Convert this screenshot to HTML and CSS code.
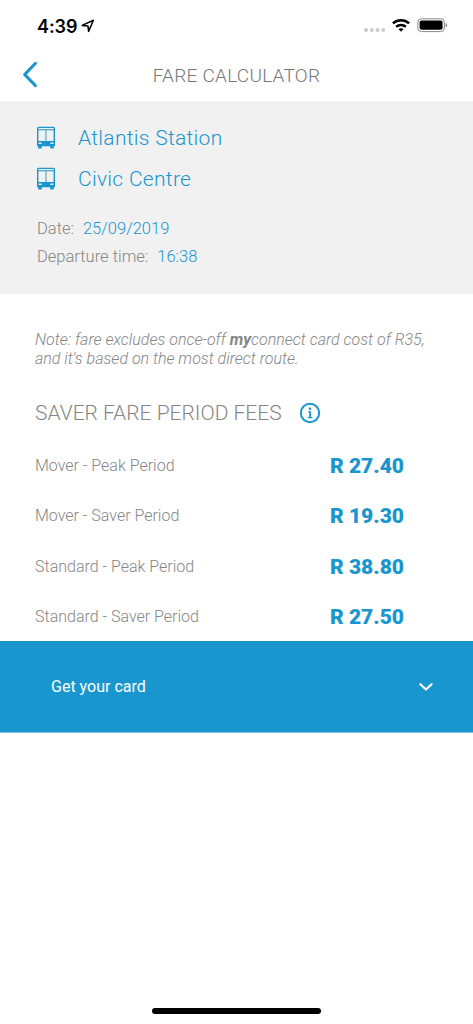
FILE: index.html
```html
<!DOCTYPE html>
<html lang="en">
<head>
<meta charset="utf-8">
<title>Fare Calculator</title>
<link rel="stylesheet" href="styles.css">
</head>
<body>
<div class="screen">
  <div class="status">
    <span class="clock">4:39</span>
    <svg class="location" width="14" height="14" viewBox="0 0 14 14"><path d="M1.2 6.4 12.4 1.2 7.6 12.4 7 7Z" fill="none" stroke="#000" stroke-width="1.5" stroke-linejoin="round"/></svg>
    <svg class="signals" width="86" height="18" viewBox="0 0 86 18">
      <g fill="#ccc"><circle cx="3" cy="13" r="2"/><circle cx="8.7" cy="13" r="2"/><circle cx="14.5" cy="13" r="2"/><circle cx="20.2" cy="13" r="2"/></g>
      <g fill="none" stroke="#000" stroke-width="2.5"><path d="M29.9 6.3A12 12 0 0 1 46.1 6.3"/><path d="M33.1 9.8A7.4 7.4 0 0 1 42.9 9.8"/></g>
      <path d="M35.4 12.1Q38 10.2 40.6 12.1L38 14.7Z"/>
      <rect x="54.8" y="1.8" width="26.6" height="12.8" rx="3.6" fill="none" stroke="#888" stroke-width="1"/>
      <rect x="56.6" y="3.6" width="23" height="9.2" rx="2"/>
      <path d="M82.6 6V10.4Q84.1 9.6 84.1 8.2T82.6 6Z" fill="#888"/>
    </svg>
  </div>
  <header class="header">
    <svg class="back" width="18" height="28" viewBox="0 0 18 28"><path d="M14.3 3.5 3.7 14.5 14.3 25.5" fill="none" stroke="#1a96cf" stroke-width="3.2" stroke-linecap="round" stroke-linejoin="round"/></svg>
    <h1 class="title">FARE CALCULATOR</h1>
  </header>
  <section class="trip">
    <div class="stop">
      <svg class="bus" width="20" height="24" viewBox="0 0 20 24"><path fill="#1a96cf" fill-rule="evenodd" d="M2.5.8H17.5Q19 .8 19 2.3V20.2H17.8V22.4H14.2V20.2H5.8V22.4H2.2V20.2H1V2.3Q1 .8 2.5.8ZM2.4 2V3.3H17.6V2ZM2.4 4.2V15H9.5V4.2ZM10.4 4.2V15H17.6V4.2ZM2.6 16.5V17.9H5.6V16.5ZM14.4 16.5V17.9H17.4V16.5Z"/></svg>
      <span class="stop-name atlantis">Atlantis Station</span>
    </div>
    <div class="stop">
      <svg class="bus" width="20" height="24" viewBox="0 0 20 24"><path fill="#1a96cf" fill-rule="evenodd" d="M2.5.8H17.5Q19 .8 19 2.3V20.2H17.8V22.4H14.2V20.2H5.8V22.4H2.2V20.2H1V2.3Q1 .8 2.5.8ZM2.4 2V3.3H17.6V2ZM2.4 4.2V15H9.5V4.2ZM10.4 4.2V15H17.6V4.2ZM2.6 16.5V17.9H5.6V16.5ZM14.4 16.5V17.9H17.4V16.5Z"/></svg>
      <span class="stop-name civic">Civic Centre</span>
    </div>
    <dl class="details">
      <div class="detail date"><dt>Date:</dt><dd>25/09/2019</dd></div>
      <div class="detail departure"><dt>Departure time:</dt><dd>16:38</dd></div>
    </dl>
  </section>
  <main class="fares">
    <p class="note"><span class="note-first">Note: fare excludes once-off <b>my</b>connect card cost of R35,</span><br><span class="note-second">and it's based on the most direct route.</span></p>
    <div class="heading">
      <h2 class="subtitle">SAVER FARE PERIOD FEES</h2>
      <svg width="22" height="22" viewBox="0 0 22 22"><circle cx="11" cy="11" r="9.2" fill="none" stroke="#1a96cf" stroke-width="2"/><circle cx="11" cy="6.8" r="1.3" fill="#1a96cf"/><path d="M9 9.2H12V15H13.4V16.2H8.8V15H10.2V10.3H9Z" fill="#1a96cf"/></svg>
    </div>
    <div class="fare"><span>Mover - Peak Period</span><strong>R 27.40</strong></div>
    <div class="fare"><span>Mover - Saver Period</span><strong>R 19.30</strong></div>
    <div class="fare"><span>Standard - Peak Period</span><strong>R 38.80</strong></div>
    <div class="fare"><span>Standard - Saver Period</span><strong>R 27.50</strong></div>
  </main>
  <div class="card">
    <span>Get your card</span>
    <svg width="16" height="10" viewBox="0 0 16 10"><path d="M2.4 2.2 8 7.5 13.6 2.2" fill="none" stroke="#fff" stroke-width="2.2" stroke-linecap="round" stroke-linejoin="round"/></svg>
  </div>
  <footer class="home"><div class="home-bar"></div></footer>
</div>
</body>
</html>
```
FILE: styles.css
```css
* { box-sizing: border-box; }
body { margin: 0; background: #fff; font-family: Roboto, sans-serif; font-weight: 300; color: #868686; }
h1, h2, p, dl, dd { margin: 0; font-weight: inherit; }
.screen { height: 1024px; display: flex; flex-direction: column; overflow: hidden; white-space: nowrap; }
.status { height: 50px; padding: 16px 24px 0 37px; display: flex; align-items: flex-start; color: #000; }
.clock { width: 44px; font: 600 18px/21px Inter, sans-serif; letter-spacing: -.1px; }
.location { margin-top: 3px; }
.signals { margin: 1px 0 0 auto; }
.header { height: 51px; display: grid; grid-template-columns: 60px 1fr 60px; align-items: center; }
.back { margin-left: 21px; margin-top: -3px; }
.title { text-align: center; font-size: 19px; line-height: 24px; letter-spacing: .25px; color: #777; }
.trip { height: 193px; padding: 16px 36px 0; background: #f1f1f1; }
.stop { height: 41px; display: flex; align-items: center; gap: 22px; color: #1a96cf; }
.stop-name { font-size: 21px; line-height: 24px; letter-spacing: .3px; }
.details { padding: 18px 0 0 1px; }
.detail { height: 28px; display: flex; gap: 9px; font-size: 16.5px; line-height: 24px; }
.detail dd { color: #1a96cf; }
.fares { height: 347px; padding: 36px 35px 0; }
.note { font-size: 16px; line-height: 19px; font-style: italic; }
.note b { font-weight: 700; }
.heading { height: 70px; margin-top: 10px; padding-bottom: 1px; display: flex; align-items: center; gap: 17px; }
.subtitle { font-size: 21px; line-height: 24px; }
.fare { height: 50.3px; padding-right: 34px; display: flex; align-items: flex-start; justify-content: space-between; line-height: 36px; font-size: 16px; }
.fare strong { color: #1a96cf; font-size: 21px; font-weight: 900; }
.card { height: 92px; padding: 0 39px 0 51px; display: flex; align-items: center; justify-content: space-between; background: #1a96cf; border-bottom: 1px solid #7dc2e3; color: #fff; font-size: 16px; font-weight: 400; }
.home { margin-top: auto; height: 16px; display: flex; justify-content: center; }
.home-bar { width: 169px; height: 6px; border-radius: 3px; background: #000; }
```
